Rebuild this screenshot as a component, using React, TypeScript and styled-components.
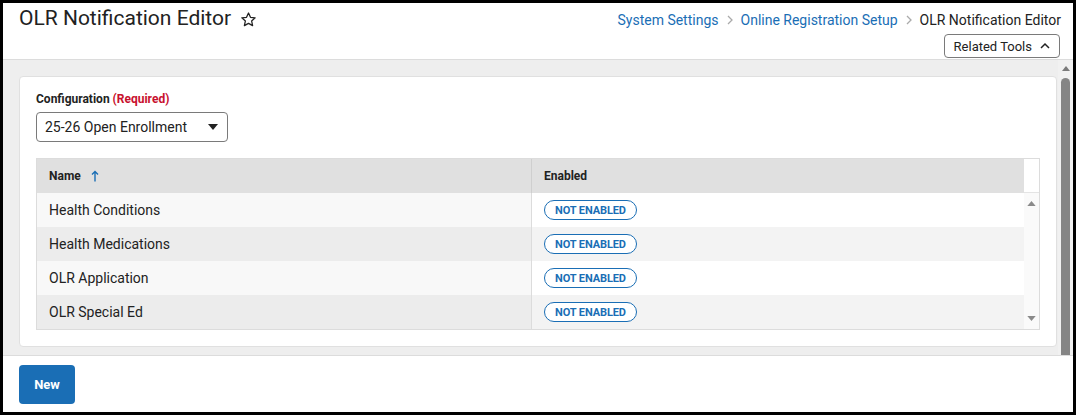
import * as React from 'react';
import styled, { createGlobalStyle } from 'styled-components';

const GlobalStyle = createGlobalStyle`
  html, body {
    margin: 0;
    padding: 0;
    background: #000;
  }
  * {
    box-sizing: border-box;
  }
`;

const Frame = styled.div`
  width: 1076px;
  height: 415px;
  border: 3px solid #000;
  background: #fff;
  display: flex;
  flex-direction: column;
  font-family: Roboto, 'Liberation Sans', sans-serif;
  color: #222;
  overflow: hidden;
`;

const Header = styled.header`
  height: 57px;
  flex: none;
  display: flex;
  justify-content: space-between;
  align-items: flex-start;
  padding: 3px 12px 0 16px;
  border-bottom: 1px solid #dcdcdc;
`;

const Title = styled.h1`
  margin: 0;
  font-size: 21px;
  line-height: 25px;
  font-weight: 400;
  color: #222;
  display: flex;
  align-items: center;

  svg {
    margin-left: 9px;
    margin-top: 2px;
  }
`;

const HeaderRight = styled.div`
  display: flex;
  flex-direction: column;
  align-items: flex-end;
  padding-top: 4px;
`;

const Breadcrumb = styled.nav`
  display: flex;
  align-items: center;
  font-size: 14px;
  line-height: 20px;
  white-space: nowrap;
`;

const Crumb = styled.a<{ $current?: boolean }>`
  color: ${(p) => (p.$current ? '#222' : '#1a6eb5')};
  text-decoration: none;
`;

const CrumbSep = styled.span`
  display: inline-flex;
  margin: 0 8px;
  color: #aaa;
`;

const ToolsButton = styled.button`
  margin-top: 4px;
  margin-right: 1px;
  height: 24px;
  display: flex;
  align-items: center;
  gap: 8px;
  white-space: nowrap;
  border: 1px solid #7a7a7a;
  border-radius: 4px;
  background: #fff;
  font-family: inherit;
  font-size: 13px;
  color: #222;
  padding: 0 9px 0 9px;
`;

const Main = styled.div`
  flex: 1;
  display: flex;
  min-height: 0;
  background: #eeeeee;
`;

const Content = styled.div`
  flex: 1;
  padding: 16px 1px 0 16px;
  overflow: hidden;
`;

const PageScroll = styled.div`
  width: 15px;
  flex: none;
  background: #f1f1f1;
  display: flex;
  flex-direction: column;
  align-items: center;
  padding-top: 6px;
`;

const ScrollThumb = styled.div`
  margin-top: 7px;
  width: 9px;
  flex: 1;
  background: #858585;
  border-radius: 5px 5px 0 0;
`;

const Card = styled.section`
  background: #fff;
  border: 1px solid #e0e0e0;
  border-radius: 4px;
  padding: 14px 16px 16px;
`;

const Label = styled.div`
  font-size: 12px;
  line-height: 16px;
  font-weight: 700;
  color: #222;
`;

const Required = styled.span`
  color: #c8102e;
`;

const SelectBox = styled.div`
  margin-top: 5px;
  width: 192px;
  height: 30px;
  border: 1px solid #7a7a7a;
  border-radius: 4px;
  display: flex;
  align-items: center;
  justify-content: space-between;
  padding: 0 9px 0 8px;
  font-size: 14px;
  color: #222;
`;

const Table = styled.div`
  margin-top: 16px;
  border: 1px solid #dcdcdc;
  display: grid;
  grid-template-columns: 494px 1fr 15px;
  grid-auto-rows: 34px;
`;

const HeadCell = styled.div<{ $divider?: boolean }>`
  background: #e0e0e0;
  display: flex;
  align-items: center;
  gap: 10px;
  padding-left: 12px;
  font-size: 12px;
  font-weight: 700;
  color: #222;
  border-left: ${(p) => (p.$divider ? '1px solid #cfcfcf' : 'none')};
`;

const HeadSpacer = styled.div`
  background: #fff;
  border-bottom: 1px solid #e4e4e4;
`;

const Cell = styled.div<{ $bg: string; $divider?: boolean }>`
  background: ${(p) => p.$bg};
  display: flex;
  align-items: center;
  padding-left: 12px;
  font-size: 14px;
  color: #222;
  border-left: ${(p) => (p.$divider ? '1px solid #dcdcdc' : 'none')};
`;

const TableScroll = styled.div`
  grid-column: 3;
  grid-row: 2 / span 4;
  background: #fafafa;
  display: flex;
  flex-direction: column;
  justify-content: space-between;
  align-items: center;
  padding: 8px 0 8px;
`;

const Badge = styled.span`
  display: inline-flex;
  align-items: center;
  height: 20px;
  padding: 0 10px;
  border: 1px solid #1a6eb5;
  border-radius: 10px;
  background: #fff;
  color: #1a6eb5;
  font-size: 11px;
  font-weight: 700;
  letter-spacing: -0.1px;
`;

const Footer = styled.footer`
  height: 57px;
  flex: none;
  border-top: 1px solid #dcdcdc;
  padding: 9px 16px 0;
  background: #fff;
`;

const PrimaryButton = styled.button`
  width: 56px;
  height: 39px;
  border: none;
  border-radius: 4px;
  background: #1a6eb5;
  color: #fff;
  font-family: inherit;
  font-size: 13px;
  font-weight: 700;
`;

const Star = () => (
  <svg width="17" height="17" viewBox="0 0 24 24" fill="none" stroke="#222" strokeWidth="1.8" strokeLinejoin="round">
    <path d="M12 2.8l2.8 6.1 6.6.7-5 4.5 1.4 6.6L12 17.4l-5.8 3.3 1.4-6.6-5-4.5 6.6-.7z" />
  </svg>
);

const Chevron = ({ up }: { up?: boolean }) =>
  up ? (
    <svg width="10" height="10" viewBox="0 0 10 10" fill="none" stroke="currentColor" strokeWidth="1.5">
      <path d="M1 7l4-4 4 4" />
    </svg>
  ) : (
    <svg width="6" height="10" viewBox="0 0 6 10" fill="none" stroke="currentColor" strokeWidth="1.3">
      <path d="M1 1l4 4-4 4" />
    </svg>
  );

const Tri = ({ down, size = 9, color = '#8a8a8a' }: { down?: boolean; size?: number; color?: string }) => (
  <svg width={size} height={Math.round(size * 0.6)} viewBox="0 0 10 6">
    <path d={down ? 'M0 0h10L5 6z' : 'M0 6h10L5 0z'} fill={color} />
  </svg>
);

const SortArrow = () => (
  <svg width="8" height="12" viewBox="0 0 8 12" fill="none" stroke="#1a6eb5" strokeWidth="1.4">
    <path d="M4 11.5V1.5M1 4.5l3-3 3 3" />
  </svg>
);

const rows = ['Health Conditions', 'Health Medications', 'OLR Application', 'OLR Special Ed'];

const App: React.FC = () => {
  return (
    <>
      <GlobalStyle />
      <Frame>
        <Header>
          <Title>
            OLR Notification Editor
            <Star />
          </Title>
          <HeaderRight>
            <Breadcrumb>
              <Crumb>System Settings</Crumb>
              <CrumbSep><Chevron /></CrumbSep>
              <Crumb>Online Registration Setup</Crumb>
              <CrumbSep><Chevron /></CrumbSep>
              <Crumb $current>OLR Notification Editor</Crumb>
            </Breadcrumb>
            <ToolsButton>
              Related Tools
              <Chevron up />
            </ToolsButton>
          </HeaderRight>
        </Header>
        <Main>
          <Content>
            <Card>
              <Label>
                Configuration <Required>(Required)</Required>
              </Label>
              <SelectBox>
                <span>25-26 Open Enrollment</span>
                <Tri down size={10} color="#222" />
              </SelectBox>
              <Table>
                <HeadCell>
                  Name
                  <SortArrow />
                </HeadCell>
                <HeadCell $divider>Enabled</HeadCell>
                <HeadSpacer />
                {rows.map((name, i) => (
                  <React.Fragment key={name}>
                    <Cell $bg={i % 2 ? '#ececec' : '#f8f8f8'}>{name}</Cell>
                    <Cell $bg={i % 2 ? '#f3f3f3' : '#fff'} $divider>
                      <Badge>NOT ENABLED</Badge>
                    </Cell>
                  </React.Fragment>
                ))}
                <TableScroll>
                  <Tri />
                  <Tri down />
                </TableScroll>
              </Table>
            </Card>
          </Content>
          <PageScroll>
            <Tri size={8} color="#7a7a7a" />
            <ScrollThumb />
          </PageScroll>
        </Main>
        <Footer>
          <PrimaryButton>New</PrimaryButton>
        </Footer>
      </Frame>
    </>
  );
};

export default App;
